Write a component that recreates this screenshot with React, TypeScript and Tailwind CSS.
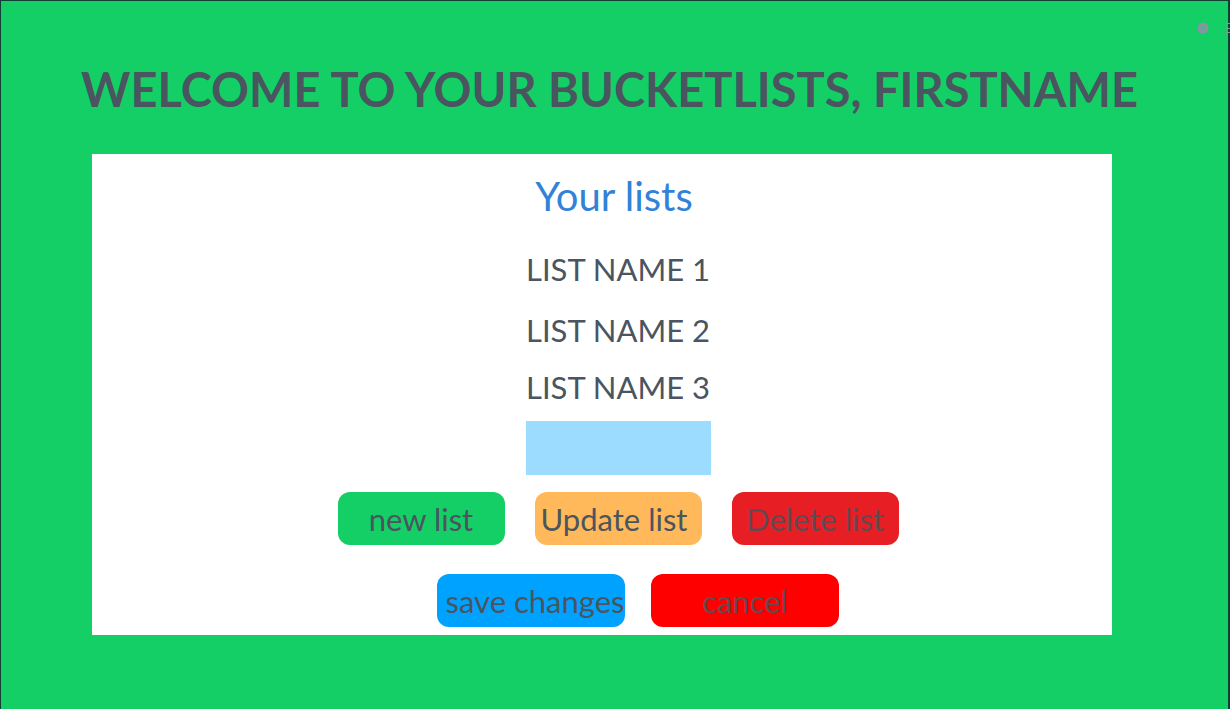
import React from 'react';

const lists = [
  { name: 'LIST NAME 1', row: 'mb-[21px]' },
  { name: 'LIST NAME 2', row: 'mb-[17px]' },
  { name: 'LIST NAME 3', row: 'mb-[14px]' },
];

export default function App() {
  return (
    <div className="flex min-h-screen flex-col border-t border-r-2 border-l border-[#123f35] bg-[#14cf66] font-['Lato',sans-serif] text-[#4a5560]">
      <header className="flex h-[54px] items-center justify-end gap-[15px]">
        <button aria-label="Settings" className="flex size-4 items-center justify-center">
          <svg viewBox="0 0 16 16" className="size-4" aria-hidden="true">
            <circle cx="8" cy="8" r="4" fill="#4fb582" stroke="#8a92a6" strokeWidth="3" />
            <path d="M6.5 8h3" stroke="#8a92a6" />
          </svg>
        </button>
        <button aria-label="Menu" className="-mr-[2px] w-1">
          <svg viewBox="0 0 4 12" className="h-3 w-1" aria-hidden="true">
            <path d="M0 1.5h4M0 6.5h4M0 10.5h4" stroke="#7f9b9b" />
          </svg>
        </button>
      </header>
      <h1 className="mt-1 pr-2.5 text-center text-[47px] leading-[60px] font-bold whitespace-nowrap">
        WELCOME TO YOUR BUCKETLISTS, FIRSTNAME
      </h1>
      <main className="mt-[35px] mr-[116px] ml-[91px] flex flex-col bg-white pb-2">
        <section className="flex flex-col items-center pt-4 pl-8">
          <h2 className="-ml-2 text-[40px] leading-[52px] text-[#3182d8]">Your lists</h2>
          <ul className="mt-[27px] text-[31px] leading-[40px]">
            {lists.map(({ name, row }) => (
              <li key={name} className={row}>{name}</li>
            ))}
          </ul>
          <input aria-label="List name" className="h-[54px] w-[185px] bg-[#9bdcff]" />
        </section>
        <div className="mt-[17px] flex justify-center gap-[30px] pl-8 text-[31px] leading-[40px]">
          <button className="h-[53px] w-[167px] rounded-xl bg-[#14cf66]">new list</button>
          <button className="h-[53px] w-[167px] rounded-xl bg-[#ffb95a] pr-2">Update list</button>
          <button className="h-[53px] w-[167px] rounded-xl bg-[#e81e25] text-[#67484f]">Delete list</button>
        </div>
        <div className="mt-[29px] flex justify-center gap-[26px] pl-[72px] text-[31px] leading-[40px]">
          <button className="h-[53px] w-[188px] rounded-xl bg-[#00a2ff] pl-2 whitespace-nowrap">save changes</button>
          <button className="h-[53px] w-[188px] rounded-xl bg-[#ff0000] text-[#67484f]">cancel</button>
        </div>
      </main>
    </div>
  );
}
